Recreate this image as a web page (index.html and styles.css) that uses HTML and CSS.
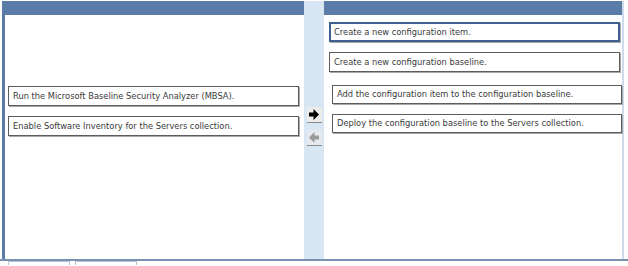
FILE: index.html
```html
<!DOCTYPE html>
<html lang="en">

<head>
  <meta charset="utf-8" />
  <title>Configuration baseline steps</title>
  <meta name="viewport" content="width=device-width, initial-scale=1">
  <link rel="stylesheet" href="styles.css">
</head>

<body>
  <div class="frame">
    <!-- =================== ACTIONS =================== -->
    <section class="panel panel-left">
      <div class="panel-head"></div>
      <ul class="items items-left">
        <li class="item">Run the Microsoft Baseline Security Analyzer (MBSA).</li>
        <li class="item">Enable Software Inventory for the Servers collection.</li>
      </ul>
    </section>

    <!-- =================== MOVE BUTTONS =================== -->
    <div class="middle">
      <div class="move-btn">
        <svg width="10" height="11" viewBox="0 0 10 11">
          <path d="M0 3.5h4.5V0L10 5.5 4.5 11V7.5H0z" fill="#000" />
        </svg>
      </div>
      <div class="move-btn disabled">
        <svg width="10" height="11" viewBox="0 0 10 11">
          <path d="M10 3.5H5.5V0L0 5.5 5.5 11V7.5H10z" fill="#9a9a9a" />
        </svg>
      </div>
    </div>

    <!-- =================== ANSWER AREA =================== -->
    <section class="panel panel-right">
      <div class="panel-head"></div>
      <ul class="items items-right">
        <li class="item selected">Create a new configuration item.</li>
        <li class="item">Create a new configuration baseline.</li>
        <li class="item shifted">Add the configuration item to the configuration baseline.</li>
        <li class="item shifted">Deploy the configuration baseline to the Servers collection.</li>
      </ul>
    </section>
  </div>

  <div class="tabs">
    <span class="tab"></span>
    <span class="tab"></span>
  </div>
</body>
</html>
```

FILE: styles.css
```css
/* ===== RESET & BODY ===== */
* {
  box-sizing: border-box;
  margin: 0;
  padding: 0
}

body {
  font-family: "DejaVu Sans", Verdana, sans-serif;
  background: #fff;
  color: #333;
  width: 628px;
  height: 266px;
  overflow: hidden
}

/* ===== LAYOUT ===== */
.frame {
  display: flex;
  height: 261px;
  padding: 1px 4px 0 2px;
  border-bottom: 2px solid #7a91b1
}

.panel {
  background: #fff;
  display: flex;
  flex-direction: column
}

.panel-head {
  height: 14px;
  background: #5a7ca6;
  flex: none
}

.panel-left {
  width: 302px;
  border-left: 3px solid #5a7ca6
}

.panel-right {
  width: 300px;
  border-right: 2px solid #cddbeb
}

.middle {
  width: 20px;
  background: #d8e5f2;
  display: flex;
  flex-direction: column;
  align-items: center;
  gap: 7px;
  padding-top: 106px
}

.move-btn {
  width: 15px;
  height: 16px;
  background: #ececec;
  border-bottom: 1px solid #8a8a8a;
  display: flex;
  align-items: center;
  justify-content: center
}

.move-btn.disabled {
  background: #e6e9ed
}

/* ===== ITEMS ===== */
.items {
  list-style: none;
  display: flex;
  flex-direction: column;
  gap: 10px
}

.items-left {
  padding: 71px 5px 0 3px
}

.items-right {
  padding: 7px 0 0 5px
}

.item {
  height: 20px;
  border: 1px solid #5c5c5c;
  box-shadow: 1px 1px 0 #a8a8a8;
  padding-left: 4px;
  font-size: 8.3px;
  line-height: 18px;
  color: #3a3a3a;
  white-space: nowrap;
  width: 291px
}

.item.selected {
  border: 2px solid #40618f;
  line-height: 16px;
  padding-left: 3px
}

.item.shifted {
  margin-left: 3px;
  width: 290px;
  height: 19px;
  line-height: 17px
}

.item.shifted:nth-child(3) {
  margin-top: 3px
}

/* ===== TABS ===== */
.tabs {
  display: flex;
  gap: 5px;
  padding-left: 8px
}

.tab {
  width: 62px;
  height: 4px;
  border: 1px solid #b8c4d4;
  border-bottom: none
}
```
